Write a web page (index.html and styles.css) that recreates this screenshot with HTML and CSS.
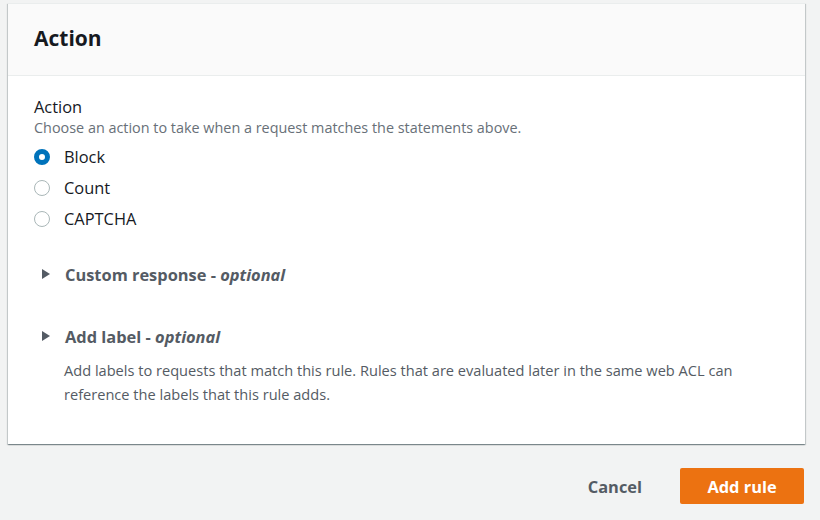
FILE: index.html
```html
<!DOCTYPE html>
<html>
<head>
<meta charset="utf-8">
<link rel="stylesheet" href="styles.css">
</head>
<body>
<div class="card">
  <div class="card-header"><h2>Action</h2></div>
  <div class="card-body">
    <div class="field-label">Action</div>
    <div class="field-desc">Choose an action to take when a request matches the statements above.</div>
    <div class="radios">
      <label class="radio"><span class="dot checked"></span>Block</label>
      <label class="radio"><span class="dot"></span>Count</label>
      <label class="radio"><span class="dot"></span>CAPTCHA</label>
    </div>
    <div class="expander first">
      <svg class="caret" width="10" height="10" viewBox="0 0 10 10"><path d="M1 0 L9 5 L1 10 Z" fill="#545b64"/></svg>
      <span class="exp-title">Custom response - <i>optional</i></span>
    </div>
    <div class="expander second">
      <svg class="caret" width="10" height="10" viewBox="0 0 10 10"><path d="M1 0 L9 5 L1 10 Z" fill="#545b64"/></svg>
      <span class="exp-title">Add label - <i>optional</i></span>
    </div>
    <p class="exp-desc">Add labels to requests that match this rule. Rules that are evaluated later in the same web ACL can reference the labels that this rule adds.</p>
  </div>
</div>
<div class="actions">
  <button class="btn-link">Cancel</button>
  <button class="btn-primary">Add rule</button>
</div>
</body>
</html>
```
FILE: styles.css
```css
* { box-sizing: border-box; }
html, body { margin: 0; padding: 0; }
body {
  background: #f2f3f3;
  font-family: "Open Sans", "Noto Sans", sans-serif;
  color: #16191f;
  width: 820px;
  height: 520px;
  overflow: hidden;
  padding: 3px 15px 0 8px;
}
.card {
  background: #fff;
  box-shadow: 0 1px 1px 0 rgba(0,28,36,.3), 1px 1px 1px 0 rgba(0,28,36,.15), -1px 1px 1px 0 rgba(0,28,36,.15);
  border-top: 1px solid #eaeded;
}
.card-header {
  background: #fafafa;
  height: 72px;
  border-bottom: 1px solid #eaeded;
  padding: 0 26px 3px;
  display: flex;
  align-items: center;
}
.card-header h2 {
  margin: 0;
  font-size: 21px;
  font-weight: 700;
  color: #16191f;
}
.card-body {
  padding: 19px 26px 38px;
}
.field-label {
  font-size: 16.4px;
  line-height: 23px;
}
.field-desc {
  font-size: 14.4px;
  line-height: 20px;
  color: #687078;
}
.radios {
  display: flex;
  flex-direction: column;
  margin-top: 3px;
}
.radio {
  display: flex;
  align-items: center;
  height: 31px;
  font-size: 16.4px;
  gap: 14px;
}
.dot {
  width: 16px;
  height: 16px;
  border-radius: 50%;
  border: 1px solid #aab7b8;
  background: #fff;
}
.dot.checked {
  border: 5px solid #0073bb;
}
.expander {
  display: flex;
  align-items: center;
  gap: 14px;
  padding-left: 7px;
  height: 24px;
}
.expander.first { margin-top: 28px; }
.expander.second { margin-top: 38px; }
.exp-title {
  font-size: 16.4px;
  font-weight: 700;
  color: #545b64;
}
.exp-title i { font-weight: 700; }
.exp-desc {
  margin: 10px 0 0 30px;
  font-size: 14.6px;
  line-height: 24px;
  color: #545b64;
}
.actions {
  display: flex;
  justify-content: flex-end;
  align-items: center;
  margin-top: 24px;
  gap: 18px;
  padding-right: 1px;
}
button {
  font-family: inherit;
  font-weight: 700;
  font-size: 16.4px;
  border: none;
  cursor: pointer;
}
.btn-link {
  background: none;
  color: #545b64;
  padding: 0 20px;
  height: 36px;
}
.btn-primary {
  background: #ec7211;
  color: #fff;
  border-radius: 2px;
  width: 124px;
  height: 36px;
}
```
